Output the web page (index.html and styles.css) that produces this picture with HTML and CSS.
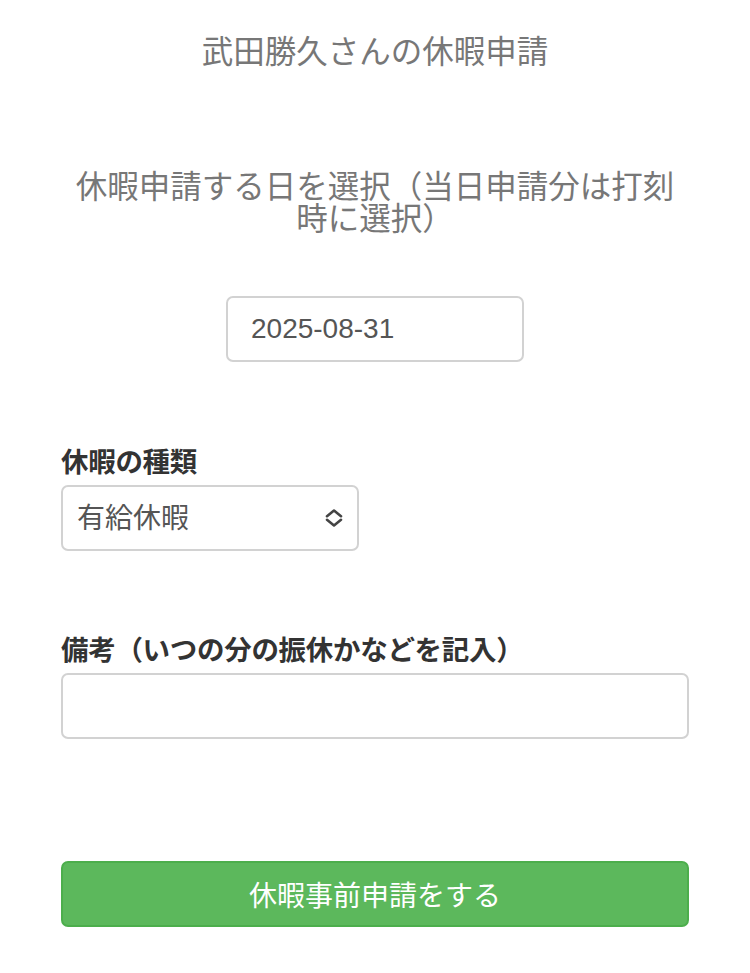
FILE: index.html
```html
<!DOCTYPE html>
<html lang="ja">
<head>
<meta charset="utf-8">
<title>休暇申請</title>
<link rel="stylesheet" href="styles.css">
</head>
<body>
<main class="page">
  <h1 class="title">武田勝久さんの休暇申請</h1>
  <h2 class="subtitle">休暇申請する日を選択（当日申請分は打刻時に選択）</h2>
  <div class="date-row">
    <input class="control date-input" type="text" value="2025-08-31">
  </div>
  <label class="field-label label-kind">休暇の種類</label>
  <div class="select-wrap">
    <select class="control select">
      <option>有給休暇</option>
    </select>
    <svg class="chevron" width="18" height="18" viewBox="0 0 18 18" aria-hidden="true">
      <path d="M2 7.2 L9 1.6 L16 7.2" fill="none" stroke="#444" stroke-width="2.6" stroke-linecap="round" stroke-linejoin="round"/>
      <path d="M2 10.8 L9 16.4 L16 10.8" fill="none" stroke="#444" stroke-width="2.6" stroke-linecap="round" stroke-linejoin="round"/>
    </svg>
  </div>
  <label class="field-label label-note">備考（いつの分の振休かなどを記入）</label>
  <input class="control note-input" type="text">
  <button class="submit" type="button">休暇事前申請をする</button>
</main>
</body>
</html>
```

FILE: styles.css
```css
html, body {
  margin: 0;
  padding: 0;
  background: #fff;
}

body {
  font-family: "Liberation Sans", "Noto Sans CJK JP", sans-serif;
  color: #333;
}

.page {
  display: flex;
  flex-direction: column;
  padding: 32px 61px 0;
}

.title {
  margin: 0;
  font-size: 31.5px;
  line-height: 40px;
  font-weight: 400;
  color: #777;
  text-align: center;
}

.subtitle {
  margin: 99px 0 0;
  padding: 0 10px;
  font-size: 31.5px;
  line-height: 32px;
  font-weight: 400;
  color: #777;
  text-align: center;
}

.date-row {
  display: flex;
  justify-content: center;
  margin-top: 61px;
}

.control {
  box-sizing: border-box;
  height: 66px;
  border: 2px solid #d2d2d2;
  border-radius: 7px;
  background: #fff;
  font-family: "Liberation Sans", "Noto Sans CJK JP", sans-serif;
  font-size: 28px;
  color: #555;
  outline: none;
  margin: 0;
}

.date-input {
  width: 298px;
  padding: 0 23px;
}

.field-label {
  display: block;
  font-size: 27.5px;
  line-height: 36px;
  font-weight: 700;
  color: #333;
  letter-spacing: -0.3px;
}

.label-kind {
  margin-top: 83px;
}

.select-wrap {
  position: relative;
  width: 298px;
  margin-top: 4px;
}

.select {
  width: 298px;
  padding: 0 40px 0 14px;
  appearance: none;
  -webkit-appearance: none;
}

.chevron {
  position: absolute;
  right: 16px;
  top: 24px;
  pointer-events: none;
}

.label-note {
  margin-top: 82px;
}

.note-input {
  width: 100%;
  margin-top: 4px;
  padding: 0 23px;
}

.submit {
  box-sizing: border-box;
  width: 100%;
  height: 66px;
  margin-top: 122px;
  background: #5cb85c;
  border: 2px solid #4cae4c;
  border-radius: 7px;
  color: #fff;
  font-family: "Liberation Sans", "Noto Sans CJK JP", sans-serif;
  font-size: 28px;
  font-weight: 400;
  cursor: pointer;
}
```
